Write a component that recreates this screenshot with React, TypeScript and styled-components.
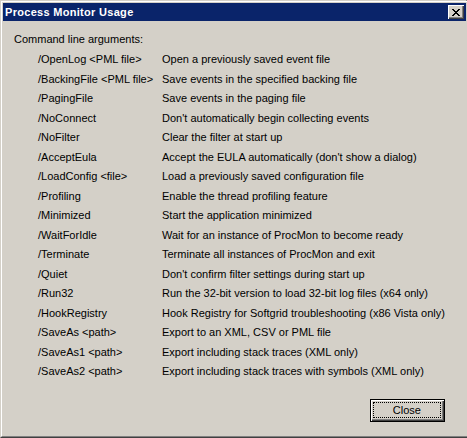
import React from "react";
import styled, { createGlobalStyle } from "styled-components";

const Global = createGlobalStyle`
  html, body { margin: 0; padding: 0; background: #d4d0c8; }
  body { font-family: "Liberation Sans", Arial, sans-serif; font-size: 11px; color: #000; }
  * { box-sizing: border-box; }
`;

const Window = styled.div`
  width: 467px;
  height: 438px;
  display: flex;
  border-style: solid;
  border-width: 1px;
  border-color: #d4d0c8 #404040 #404040 #d4d0c8;
`;

const WindowInner = styled.div`
  flex: 1;
  display: flex;
  flex-direction: column;
  border-style: solid;
  border-width: 1px;
  border-color: #ffffff #808080 #808080 #ffffff;
  padding: 1px;
  background: #d4d0c8;
`;

const TitleBar = styled.div`
  height: 18px;
  flex: none;
  display: flex;
  align-items: center;
  justify-content: space-between;
  padding: 0 2px 0 2px;
  margin-bottom: 1px;
  background: #0a246a;
`;

const TitleText = styled.span`
  color: #fff;
  font-weight: bold;
  font-size: 11px;
  line-height: 13px;
  letter-spacing: 0.3px;
  padding-top: 1px;
`;

const CaptionButton = styled.button`
  width: 16px;
  height: 14px;
  padding: 0 0 0 1px;
  border: none;
  background: #d4d0c8;
  box-shadow: inset 1px 1px #ffffff, inset -1px -1px #404040, inset -2px -2px #808080;
  display: flex;
  align-items: center;
  justify-content: center;
`;

const Client = styled.div`
  flex: 1;
  display: flex;
  flex-direction: column;
  padding: 11px 21px 13px 11px;
`;

const Heading = styled.div`
  line-height: 13px;
`;

const ArgList = styled.div`
  margin-top: 4px;
  padding-left: 24px;
  display: grid;
  grid-template-columns: 124px 1fr;
  grid-auto-rows: 19.5px;
  align-items: center;
`;

const Cell = styled.span`
  line-height: 13px;
  white-space: nowrap;
`;

const Footer = styled.div`
  margin-top: auto;
  display: flex;
  justify-content: flex-end;
`;

const DefaultButton = styled.button`
  width: 75px;
  height: 23px;
  padding: 0;
  border: 1px solid #000;
  background: #d4d0c8;
  box-shadow: inset 1px 1px #ffffff, inset -1px -1px #404040, inset -2px -2px #808080;
  font-family: "Liberation Sans", Arial, sans-serif;
  font-size: 11px;
  color: #000;
  display: flex;
`;

const FocusRect = styled.span`
  flex: 1;
  margin: 2px 3px 3px 2px;
  border: 1px dotted #000;
  display: flex;
  align-items: center;
  justify-content: center;
  line-height: 13px;
`;

const args: [string, string][] = [
  ["/OpenLog <PML file>", "Open a previously saved event file"],
  ["/BackingFile <PML file>", "Save events in the specified backing file"],
  ["/PagingFile", "Save events in the paging file"],
  ["/NoConnect", "Don't automatically begin collecting events"],
  ["/NoFilter", "Clear the filter at start up"],
  ["/AcceptEula", "Accept the EULA automatically (don't show a dialog)"],
  ["/LoadConfig <file>", "Load a previously saved configuration file"],
  ["/Profiling", "Enable the thread profiling feature"],
  ["/Minimized", "Start the application minimized"],
  ["/WaitForIdle", "Wait for an instance of ProcMon to become ready"],
  ["/Terminate", "Terminate all instances of ProcMon and exit"],
  ["/Quiet", "Don't confirm filter settings during start up"],
  ["/Run32", "Run the 32-bit version to load 32-bit log files (x64 only)"],
  ["/HookRegistry", "Hook Registry for Softgrid troubleshooting (x86 Vista only)"],
  ["/SaveAs <path>", "Export to an XML, CSV or PML file"],
  ["/SaveAs1 <path>", "Export including stack traces (XML only)"],
  ["/SaveAs2 <path>", "Export including stack traces with symbols (XML only)"],
];

const CloseGlyph = () => (
  <svg width="8" height="7" viewBox="0 0 8 7" shapeRendering="crispEdges">
    <path
      fill="#000"
      d="M0 0h2v1H0zM6 0h2v1H6zM1 1h2v1H1zM5 1h2v1H5zM2 2h4v1H2zM3 3h2v1H3zM2 4h4v1H2zM1 5h2v1H1zM5 5h2v1H5zM0 6h2v1H0zM6 6h2v1H6z"
    />
  </svg>
);

export default function App() {
  return (
    <>
      <Global />
      <Window>
        <WindowInner>
          <TitleBar>
            <TitleText>Process Monitor Usage</TitleText>
            <CaptionButton aria-label="Close">
              <CloseGlyph />
            </CaptionButton>
          </TitleBar>
          <Client>
            <Heading>Command line arguments:</Heading>
            <ArgList>
              {args.map(([a, d]) => (
                <React.Fragment key={a}>
                  <Cell>{a}</Cell>
                  <Cell>{d}</Cell>
                </React.Fragment>
              ))}
            </ArgList>
            <Footer>
              <DefaultButton>
                <FocusRect>Close</FocusRect>
              </DefaultButton>
            </Footer>
          </Client>
        </WindowInner>
      </Window>
    </>
  );
}
